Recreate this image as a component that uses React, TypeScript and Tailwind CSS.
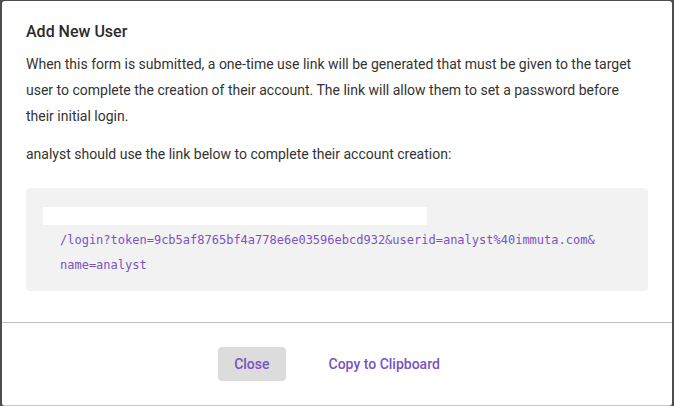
import React from "react";

const App = () => {
  return (
    <div className="w-[674px] h-[406px] bg-[#4e4e4e] pt-px pl-[2px] overflow-hidden font-['Roboto',sans-serif]">
      <div className="w-[670px] h-[405px] bg-white rounded-[3px] border-b border-[#c6c6c6] flex flex-col">
        <div className="px-6 pt-[19px]">
          <h2 className="text-[16px] leading-6 font-medium text-[#2b2b2b]">Add New User</h2>
          <p className="mt-[7px] text-[14px] leading-[26px] text-[#333]">
            When this form is submitted, a one-time use link will be generated that must be given to the target user
            to complete the creation of their account. The link will allow them to set a password before their initial
            login.
          </p>
          <p className="mt-3 text-[14px] leading-[26px] text-[#333]">
            analyst should use the link below to complete their account creation:
          </p>
          <div className="mt-[21px] h-[103px] bg-[#f2f2f2] rounded-[4px] pt-[19px] pl-[17px] pr-4">
            <div className="w-[384px] h-[18px] bg-white" />
            <div className="pl-[17px] pt-[3px] font-['DejaVu_Sans_Mono',monospace] text-[12px] leading-[25px] text-[#7b52c4]">
              <div>/login?token=9cb5af8765bf4a778e6e03596ebcd932&amp;userid=analyst%40immuta.com&amp;</div>
              <div>name=analyst</div>
            </div>
          </div>
        </div>
        <div className="mt-[31px] border-t border-[#bdbdbd] flex justify-center items-center gap-[27px] pt-[24px]">
          <button className="h-[34px] px-4 bg-[#dcdcdc] rounded-[4px] text-[14px] font-medium text-[#7b52c4]">
            Close
          </button>
          <button className="h-[34px] px-4 text-[14px] font-medium text-[#7b52c4]">Copy to Clipboard</button>
        </div>
      </div>
    </div>
  );
};

export default App;
